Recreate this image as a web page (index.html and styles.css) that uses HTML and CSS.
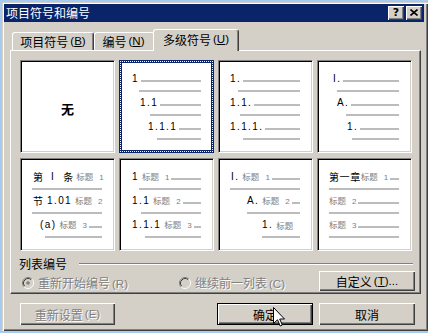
FILE: index.html
```html
<!DOCTYPE html>
<html>
<head>
<meta charset="utf-8">
<link rel="stylesheet" href="styles.css">
</head>
<body>
<div class="dialog">
  <div class="titlebar">
    <span class="title">项目符号和编号</span>
    <div class="tbtns">
      <span class="tbtn q">?</span>
      <span class="tbtn"><svg width="8" height="7" viewBox="0 0 8 7"><path d="M0.5 0.5 L7.5 6.5 M7.5 0.5 L0.5 6.5" stroke="#000" stroke-width="1.6"/></svg></span>
    </div>
  </div>

  <div class="tabs">
    <div class="tab t1">项目符号<span class="acc">(<u>B</u>)</span></div>
    <div class="tab t2">编号<span class="acc">(<u>N</u>)</span></div>
    <div class="tab t3 active">多级符号<span class="acc">(<u>U</u>)</span></div>
  </div>

  <div class="panel">
    <div class="grid">
      <div class="card none"><span>无</span></div>

      <div class="card sel">
        <div class="item"><div class="row m1"><span class="n">1</span><i class="ln"></i></div><div class="ln2 m8"></div></div>
        <div class="item"><div class="row m9"><span class="n">1.1</span><i class="ln"></i></div><div class="ln2 m19"></div></div>
        <div class="item"><div class="row m17"><span class="n">1.1.1</span><i class="ln"></i></div><div class="ln2 m26"></div></div>
      </div>

      <div class="card">
        <div class="item"><div class="row m0"><span class="n">1.</span><i class="ln"></i></div><div class="ln2 m8"></div></div>
        <div class="item"><div class="row m0"><span class="n">1.1.</span><i class="ln"></i></div><div class="ln2 m10"></div></div>
        <div class="item"><div class="row m0"><span class="n">1.1.1.</span><i class="ln"></i></div><div class="ln2 m13"></div></div>
      </div>

      <div class="card">
        <div class="item"><div class="row m4"><span class="n">I.</span><i class="ln"></i></div><div class="ln2 m8"></div></div>
        <div class="item"><div class="row m8"><span class="n">A.</span><i class="ln"></i></div><div class="ln2 m17"></div></div>
        <div class="item"><div class="row m18"><span class="n">1.</span><i class="ln"></i></div><div class="ln2 m23"></div></div>
      </div>

      <div class="card">
        <div class="item"><div class="row m1"><span class="cj">第</span><span class="n gap">I</span><span class="cj gap">条</span><span class="h">标题<b>1</b></span></div><div class="ln2 m0"></div></div>
        <div class="item"><div class="row m1"><span class="cj">节</span><span class="n sp">1.01</span><span class="h">标题<b>2</b></span></div><div class="ln2 m0"></div></div>
        <div class="item"><div class="row m8"><span class="n">(a)</span><span class="h">标题<b>3</b></span><i class="ln"></i></div><div class="ln2 m13"></div></div>
      </div>

      <div class="card">
        <div class="item"><div class="row m1"><span class="n">1</span><span class="h">标题<b>1</b></span><i class="ln"></i></div><div class="ln2 m8"></div></div>
        <div class="item"><div class="row m1"><span class="n">1.1</span><span class="h">标题<b>2</b></span><i class="ln"></i></div><div class="ln2 m10"></div></div>
        <div class="item"><div class="row m1"><span class="n">1.1.1</span><span class="h">标题<b>3</b></span><i class="ln"></i></div><div class="ln2 m14"></div></div>
      </div>

      <div class="card">
        <div class="item"><div class="row m1"><span class="n">I.</span><span class="h">标题<b>1</b></span><i class="ln"></i></div><div class="ln2 m0"></div></div>
        <div class="item"><div class="row m17"><span class="n">A.</span><span class="h">标题<b>2</b></span><i class="ln"></i></div><div class="ln2 m17"></div></div>
        <div class="item"><div class="row m32"><span class="n">1.</span><span class="h">标题</span></div><div class="ln2 m32"></div></div>
      </div>

      <div class="card">
        <div class="item"><div class="row m0"><span class="cj wide">第一章</span><span class="h tight">标题<b>1</b></span><i class="ln"></i></div><div class="ln2 m0"></div></div>
        <div class="item"><div class="row m0"><span class="h tight">标题<b>2</b></span><i class="ln"></i></div><div class="ln2 m0"></div></div>
        <div class="item"><div class="row m0"><span class="h tight">标题<b>3</b></span><i class="ln"></i></div><div class="ln2 m0"></div></div>
      </div>
    </div>

    <div class="group">
      <div class="ghead"><span>列表编号</span><i class="etch"></i></div>
      <div class="grow">
        <label class="radio dis">
          <svg width="12" height="12" viewBox="0 0 12 12">
            <circle cx="6" cy="6" r="4.5" fill="#d4d0c8"/>
            <path d="M9.89 2.11 A5.5 5.5 0 0 0 2.11 9.89" fill="none" stroke="#808080"/>
            <path d="M9.89 2.11 A5.5 5.5 0 0 1 2.11 9.89" fill="none" stroke="#fff"/>
            <path d="M9.18 2.82 A4.5 4.5 0 0 0 2.82 9.18" fill="none" stroke="#404040"/>
            <path d="M9.18 2.82 A4.5 4.5 0 0 1 2.82 9.18" fill="none" stroke="#d4d0c8"/>
            <circle cx="6" cy="6" r="1.8" fill="#808080"/>
          </svg>
          <span>重新开始编号<span class="acc">(R)</span></span>
        </label>
        <label class="radio dis r2">
          <svg width="12" height="12" viewBox="0 0 12 12">
            <circle cx="6" cy="6" r="4.5" fill="#d4d0c8"/>
            <path d="M9.89 2.11 A5.5 5.5 0 0 0 2.11 9.89" fill="none" stroke="#808080"/>
            <path d="M9.89 2.11 A5.5 5.5 0 0 1 2.11 9.89" fill="none" stroke="#fff"/>
            <path d="M9.18 2.82 A4.5 4.5 0 0 0 2.82 9.18" fill="none" stroke="#404040"/>
            <path d="M9.18 2.82 A4.5 4.5 0 0 1 2.82 9.18" fill="none" stroke="#d4d0c8"/>
          </svg>
          <span>继续前一列表<span class="acc">(C)</span></span>
        </label>
        <button class="btn custom">自定义<span class="acc">(<u>T</u>)...</span></button>
      </div>
    </div>
  </div>

  <div class="bottom">
    <button class="btn dis b1">重新设置<span class="acc">(E)</span></button>
    <button class="btn def b2">确定
      <svg class="cursor" width="12" height="20" viewBox="0 0 12 20"><path d="M0.5 0.5 L0.5 16.5 L4.5 12.8 L7.2 19 L9.3 18 L6.7 12 L11.5 12 Z" fill="#fff" stroke="#000"/></svg>
    </button>
    <button class="btn b3">取消</button>
  </div>
</div>
</body>
</html>
```

FILE: styles.css
```css
* { box-sizing: border-box; margin: 0; padding: 0; }
html, body { width: 428px; height: 333px; overflow: hidden; }
body {
  background: #a6caf0;
  font-family: "Noto Sans CJK SC", "Liberation Sans", sans-serif;
  font-size: 12px;
  color: #000;
}

.dialog {
  margin: 2px 0 0 2px;
  width: 426px;
  height: 329px;
  background: #d4d0c8;
  padding: 2px 4px 0 2px;
  box-shadow: inset 1px 1px 0 #d4d0c8, inset 2px 2px 0 #fff, inset -1px -1px 0 #404040, inset -2px -2px 0 #808080;
}

.titlebar {
  height: 18px;
  background: #0a246a;
  color: #fff;
  display: flex;
  align-items: center;
  justify-content: space-between;
  padding-left: 2px;
  padding-right: 2px;
}
.title { font-size: 12px; line-height: 18px; }
.tbtns { display: flex; gap: 2px; }
.tbtn {
  width: 16px;
  height: 14px;
  background: #d4d0c8;
  box-shadow: inset 1px 1px 0 #fff, inset -1px -1px 0 #404040, inset -2px -2px 0 #808080;
  display: flex;
  align-items: center;
  justify-content: center;
  color: #000;
  padding-bottom: 1px;
}
.tbtn.q { font: bold 11px "DejaVu Sans", sans-serif; }

.acc { font-family: "Liberation Sans", sans-serif; font-size: 11.5px; margin-left: 2px; }

.tabs {
  display: flex;
  align-items: flex-end;
  height: 21px;
  margin: 7px 0 0 6px;
  position: relative;
  z-index: 1;
}
.tab {
  height: 18px;
  background: #d4d0c8;
  border: 1px solid #fff;
  border-bottom: none;
  border-right-color: #404040;
  border-radius: 3px 3px 0 0;
  box-shadow: inset -1px 0 0 #808080;
  display: flex;
  align-items: center;
  justify-content: center;
  padding-bottom: 1px;
}
.t1 { width: 82px; margin-left: 2px; }
.t2 { width: 61px; border-right: none; box-shadow: none; padding-right: 3px; }
.t3 { width: 86px; margin-left: -2px; }
.tab.active { height: 22px; margin-bottom: -1px; padding-bottom: 3px; }

.panel {
  margin-left: 6px;
  width: 411px;
  height: 244px;
  border: 1px solid #fff;
  border-right-color: #404040;
  border-bottom-color: #404040;
  box-shadow: inset -1px -1px 0 #808080;
  padding: 9px 5px 0 9px;
}

.grid {
  display: grid;
  grid-template-columns: repeat(4, 95px);
  grid-template-rows: 93px 93px;
  column-gap: 4px;
  row-gap: 5px;
}
.card {
  background: #fff;
  border: 1px solid;
  border-color: #808080 #fff #fff #808080;
  box-shadow: inset 1px 1px 0 #000, inset -1px -1px 0 #d4d0c8;
  padding: 12px 12px 0 11px;
  position: relative;
}
.card.sel {
  border: 2px solid #0a246a;
  box-shadow: inset 0 0 0 1px #0a246a;
  padding: 11px 11px 0 10px;
}
.card.sel::before {
  content: "";
  position: absolute;
  inset: -1px;
  border: 1px dotted #fff;
}
.card.none {
  display: flex;
  align-items: center;
  justify-content: center;
  padding: 4px 0 0 0;
  font-size: 13px;
  font-weight: bold;
}

.item { height: 24px; }
.row {
  display: flex;
  align-items: center;
  height: 12px;
  white-space: nowrap;
}
.n {
  font-family: "Liberation Sans", sans-serif;
  font-size: 10px;
  letter-spacing: 1.4px;
  line-height: 12px;
}
.n.sp { margin-left: 4px; }
.gap { margin-left: 8px; }
.cj { font-size: 10px; line-height: 12px; }
.cj.wide { letter-spacing: 0.6px; }
.h {
  color: #808080;
  font-size: 8.5px;
  line-height: 12px;
  margin-left: 3px;
}
.h.tight { margin-left: 0; }
.h b {
  font-weight: normal;
  font-family: "Liberation Sans", sans-serif;
  font-size: 8px;
  margin-left: 6px;
}
.ln {
  flex: 1;
  height: 2px;
  background: #bcbcbc;
  margin: 4px 0 0 2px;
}
.ln2 {
  height: 2px;
  background: #bcbcbc;
  margin-top: 5px;
}

.m0 { margin-left: 0; }
.m1 { margin-left: 1px; }
.m4 { margin-left: 4px; }
.m8 { margin-left: 8px; }
.m9 { margin-left: 9px; }
.m10 { margin-left: 10px; }
.m13 { margin-left: 13px; }
.m14 { margin-left: 14px; }
.m17 { margin-left: 17px; }
.m18 { margin-left: 18px; }
.m19 { margin-left: 19px; }
.m23 { margin-left: 23px; }
.m26 { margin-left: 26px; }
.m32 { margin-left: 32px; }

.group { margin-top: 5px; }
.ghead {
  display: flex;
  align-items: center;
  height: 15px;
  margin-left: -1px;
}
.ghead span { line-height: 15px; }
.etch {
  flex: 1;
  height: 2px;
  border-top: 1px solid #808080;
  border-bottom: 1px solid #fff;
  margin: 1px 2px 0 12px;
}
.grow {
  display: grid;
  grid-template-columns: 157px 1fr 96px;
  align-items: center;
  height: 21px;
}
.radio {
  display: flex;
  align-items: center;
  gap: 4px;
  margin-left: 2px;
  padding-top: 2px;
}
.radio svg { display: block; }
.dis { color: #808080; text-shadow: 1px 1px 0 #fff; }

.btn {
  font-family: "Noto Sans CJK SC", sans-serif;
  font-size: 12px;
  color: #000;
  background: #d4d0c8;
  border: none;
  box-shadow: inset 1px 1px 0 #fff, inset -1px -1px 0 #404040, inset -2px -2px 0 #808080;
  display: flex;
  align-items: center;
  justify-content: center;
  position: relative;
}
.btn.dis { color: #808080; }
.custom { width: 96px; height: 20px; margin-top: -1px; }

.bottom {
  display: flex;
  margin: 9px 0 0 16px;
}
.bottom .btn { height: 22px; }
.b1 { width: 95px; }
.b2 { width: 96px; margin-left: 102px; }
.b3 { width: 96px; margin-left: 6px; }
.btn.def {
  border: 1px solid #000;
  box-shadow: inset 1px 1px 0 #fff, inset -1px -1px 0 #404040, inset -2px -2px 0 #808080;
}
.cursor {
  position: absolute;
  left: 55px;
  top: 3px;
}
```
